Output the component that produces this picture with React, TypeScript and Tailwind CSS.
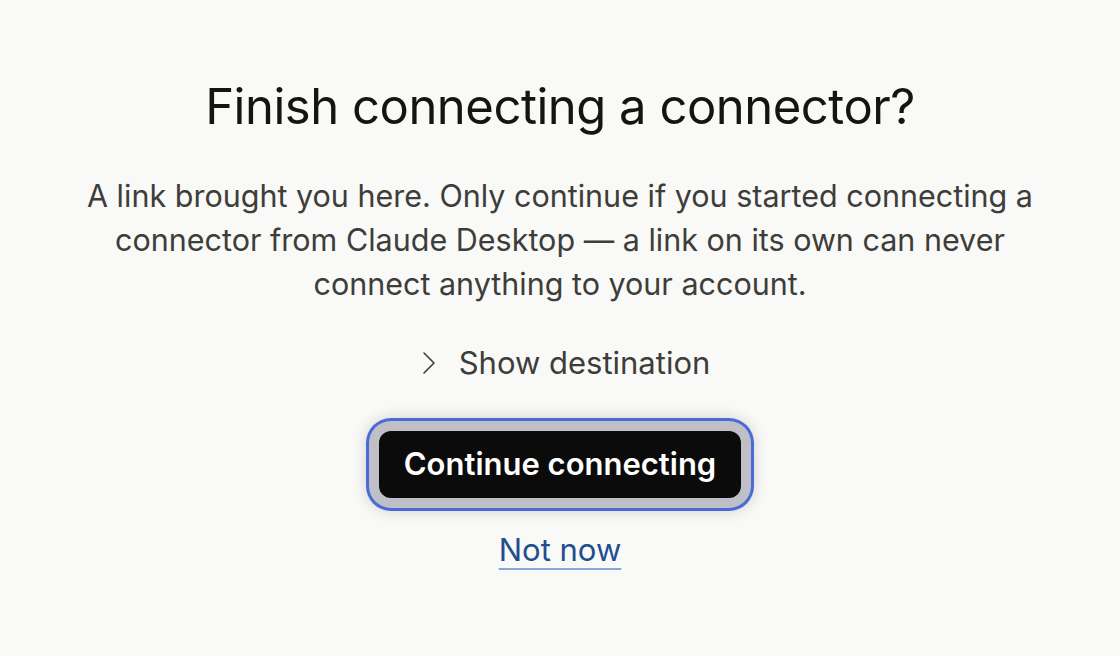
export default function App() {
  return (
    <div
      className="flex h-[656px] w-full flex-col items-center bg-[#f9f9f7] text-center"
      style={{ fontFamily: 'Inter, "Noto Sans", sans-serif' }}
    >
      <h1 className="mt-[78px] text-[49px] leading-[58px] font-normal tracking-[-0.01em] text-[#141413]">
        Finish connecting a connector?
      </h1>

      <p className="mt-[38px] max-w-[985px] text-[30.5px] leading-[44px] text-[#3d3d3a]">
        A link brought you here. Only continue if you started connecting a connector from Claude
        Desktop — a link on its own can never connect anything to your account.
      </p>

      <button className="mt-[37px] ml-[12px] flex items-center gap-[23px] text-[31px] leading-[40px] text-[#3d3d3a]">
        <svg width="14" height="24" viewBox="0 0 14 24" fill="none" stroke="currentColor" strokeWidth="1.6" strokeLinecap="round" strokeLinejoin="round">
          <polyline points="2,2 12,12 2,22" />
        </svg>
        <span>Show destination</span>
      </button>

      <button className="mt-[48px] h-[67px] rounded-[12px] bg-[#0b0b0b] px-[25px] text-[31px] font-semibold text-white shadow-[0_0_0_10px_#bfc0c7,0_0_0_13px_#4a6ad8,0_0_14px_14px_rgba(0,0,0,0.14)]">
        Continue connecting
      </button>

      <a
        href="#"
        className="mt-[32px] text-[31px] leading-[40px] text-[#1f4f8f] underline decoration-[#86a8d6] decoration-2 underline-offset-[7px]"
      >
        Not now
      </a>
    </div>
  );
}
